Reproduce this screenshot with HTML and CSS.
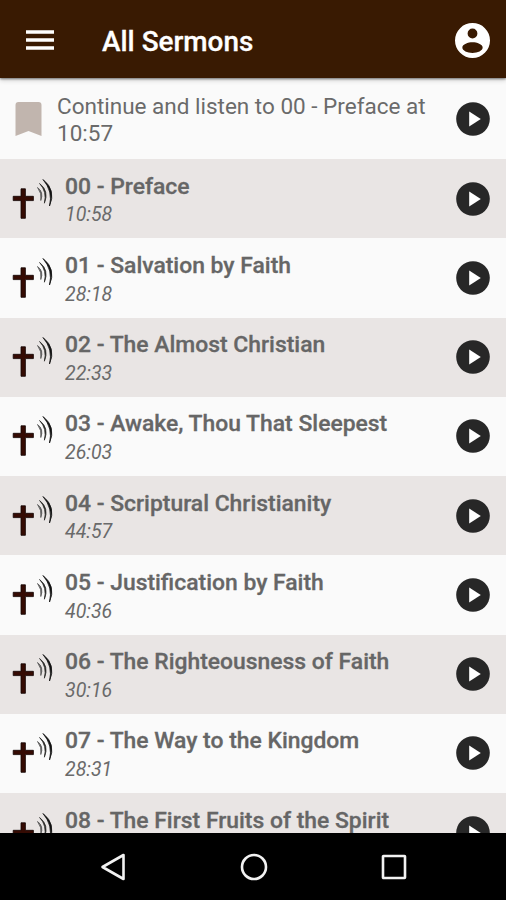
FILE: index.html
```html
<!DOCTYPE html>
<html lang="en">
<head>
<meta charset="utf-8">
<title>All Sermons</title>
<link rel="stylesheet" href="styles.css">
</head>
<body>
<svg class="defs" aria-hidden="true">
  <symbol id="play" viewBox="0 0 34 34"><circle cx="17" cy="17" r="16.8" fill="#272727"/><path d="M13.2 9.400v15.200L24.800 17z" fill="#fff"/></symbol>
  <symbol id="cross" viewBox="0 0 42 42">
    <path d="M9 10.800h4.400v7.500h8v4.300h-8v17.700H9V22.600H1.200v-4.300H9z" fill="#350b03" stroke="#100300" stroke-width=".8"/>
    <path d="M25.500 9.500q6.500 4.500 3.300 13q1.200-7.500-3.300-13z" fill="#555" stroke="#555" stroke-width=".8"/>
    <path d="M27.600 5.500q9.800 7.500 4.800 19.700q2.800-11.500-4.800-19.700z" fill="#2b2b28" stroke="#2b2b28" stroke-width=".8"/>
    <path d="M31 1.500q13.500 10.500 6.500 26.500q3.700-14.500-6.500-26.500z" fill="#111" stroke="#111" stroke-width=".8"/>
  </symbol>
</svg>
<div class="screen">
  <header class="bar">
    <svg class="menu" viewBox="0 0 28 20"><path d="M0 1.900h28M0 9.900h28M0 17.900h28" stroke="#fff" stroke-width="3.500"/></svg>
    <h1 class="heading">All Sermons</h1>
    <svg class="account" viewBox="2 2 20 20"><path fill="#fff" fill-rule="evenodd" d="M12 2a10 10 0 1 0 0 20 10 10 0 1 0 0-20zM12 5.200a2.800 2.800 0 1 1 0 5.600 2.800 2.800 0 1 1 0-5.600zM12 13c2.500 0 5.800 1.100 5.800 3 0 1.800-2.800 3.100-5.800 3.100S6.200 17.800 6.200 16c0-1.900 3.300-3 5.800-3z"/></svg>
  </header>
  <main class="list">
    <div class="resume">
      <svg class="bookmark" viewBox="0 0 26 34"><path d="M0 34V3q0-3 3-3h20q3 0 3 3v31l-13-5z" fill="#c1b5ae"/></svg>
      <p class="resume-text">Continue and listen to 00 - Preface at 10:57</p>
      <svg class="play"><use href="#play"/></svg>
    </div>
    <div class="row"><svg class="cross"><use href="#cross"/></svg><div class="info"><div class="title">00 - Preface</div><div class="time">10:58</div></div><svg class="play"><use href="#play"/></svg></div>
    <div class="row"><svg class="cross"><use href="#cross"/></svg><div class="info"><div class="title">01 - Salvation by Faith</div><div class="time">28:18</div></div><svg class="play"><use href="#play"/></svg></div>
    <div class="row"><svg class="cross"><use href="#cross"/></svg><div class="info"><div class="title">02 - The Almost Christian</div><div class="time">22:33</div></div><svg class="play"><use href="#play"/></svg></div>
    <div class="row"><svg class="cross"><use href="#cross"/></svg><div class="info"><div class="title">03 - Awake, Thou That Sleepest</div><div class="time">26:03</div></div><svg class="play"><use href="#play"/></svg></div>
    <div class="row"><svg class="cross"><use href="#cross"/></svg><div class="info"><div class="title">04 - Scriptural Christianity</div><div class="time">44:57</div></div><svg class="play"><use href="#play"/></svg></div>
    <div class="row"><svg class="cross"><use href="#cross"/></svg><div class="info"><div class="title">05 - Justification by Faith</div><div class="time">40:36</div></div><svg class="play"><use href="#play"/></svg></div>
    <div class="row"><svg class="cross"><use href="#cross"/></svg><div class="info"><div class="title">06 - The Righteousness of Faith</div><div class="time">30:16</div></div><svg class="play"><use href="#play"/></svg></div>
    <div class="row"><svg class="cross"><use href="#cross"/></svg><div class="info"><div class="title">07 - The Way to the Kingdom</div><div class="time">28:31</div></div><svg class="play"><use href="#play"/></svg></div>
    <div class="row"><svg class="cross"><use href="#cross"/></svg><div class="info"><div class="title">08 - The First Fruits of the Spirit</div></div><svg class="play"><use href="#play"/></svg></div>
  </main>
  <nav class="nav">
    <svg class="nav-icon" viewBox="0 0 28 28"><path d="M2.500 14L23.500 2v24z"/></svg>
    <svg class="nav-icon" viewBox="0 0 28 28"><circle cx="14" cy="14" r="12"/></svg>
    <svg class="nav-icon" viewBox="0 0 28 28"><rect x="3" y="3" width="22" height="22" rx=".5"/></svg>
  </nav>
</div>
</body>
</html>
```
FILE: styles.css
```css
* { box-sizing: border-box; }
body { margin: 0; font-family: Roboto, "Liberation Sans", sans-serif; background: #000; }
.defs { position: absolute; width: 0; height: 0; }
.screen { height: 900px; display: flex; flex-direction: column; overflow: hidden; }
.bar {
  position: relative; z-index: 1; flex: none; height: 78px; padding: 2px 16px 0 26px;
  display: flex; align-items: center; background: #391a02;
  box-shadow: 0 1px 2px rgba(0,0,0,.45), 0 2px 5px rgba(0,0,0,.2);
}
.menu { width: 28px; height: 20px; }
.heading { flex: 1; margin: 3px 0 0 48px; font-size: 27.9px; line-height: 34px; font-weight: 500; color: #fff; -webkit-text-stroke: .3px #fff; }
.account { width: 35px; height: 35px; }
.list { flex: none; height: 755px; overflow: hidden; background: #fafafa; }
.resume { height: 81px; padding: 0 16px 0 15px; display: flex; align-items: center; }
.bookmark { width: 27px; height: 34px; margin-top: 1px; }
.resume-text { flex: 1; margin: 3px 0 0 15px; font-size: 22.5px; line-height: 27px; color: #6a6a6a; }
.play { flex: none; width: 34px; height: 34px; }
.row { height: 79.25px; padding: 0 16px 0 12px; display: flex; align-items: center; }
.row:nth-child(even) { background: #e9e5e4; }
.cross { flex: none; width: 42px; height: 42px; }
.info { flex: 1; align-self: flex-start; padding: 12.7px 0 0 11px; }
.title { font-size: 22.9px; line-height: 30px; font-weight: 500; color: #666; -webkit-text-stroke: .3px #666; white-space: nowrap; }
.time { margin-top: .6px; font-size: 19.5px; line-height: 26px; font-style: italic; color: #6a6a6a; }
.nav { flex: 1; display: flex; justify-content: space-between; align-items: center; padding: 0 98px 0 100px; background: #000; }
.nav-icon { width: 28px; height: 28px; fill: none; stroke: #f2f2f2; stroke-width: 2.6; stroke-linejoin: round; }
```
